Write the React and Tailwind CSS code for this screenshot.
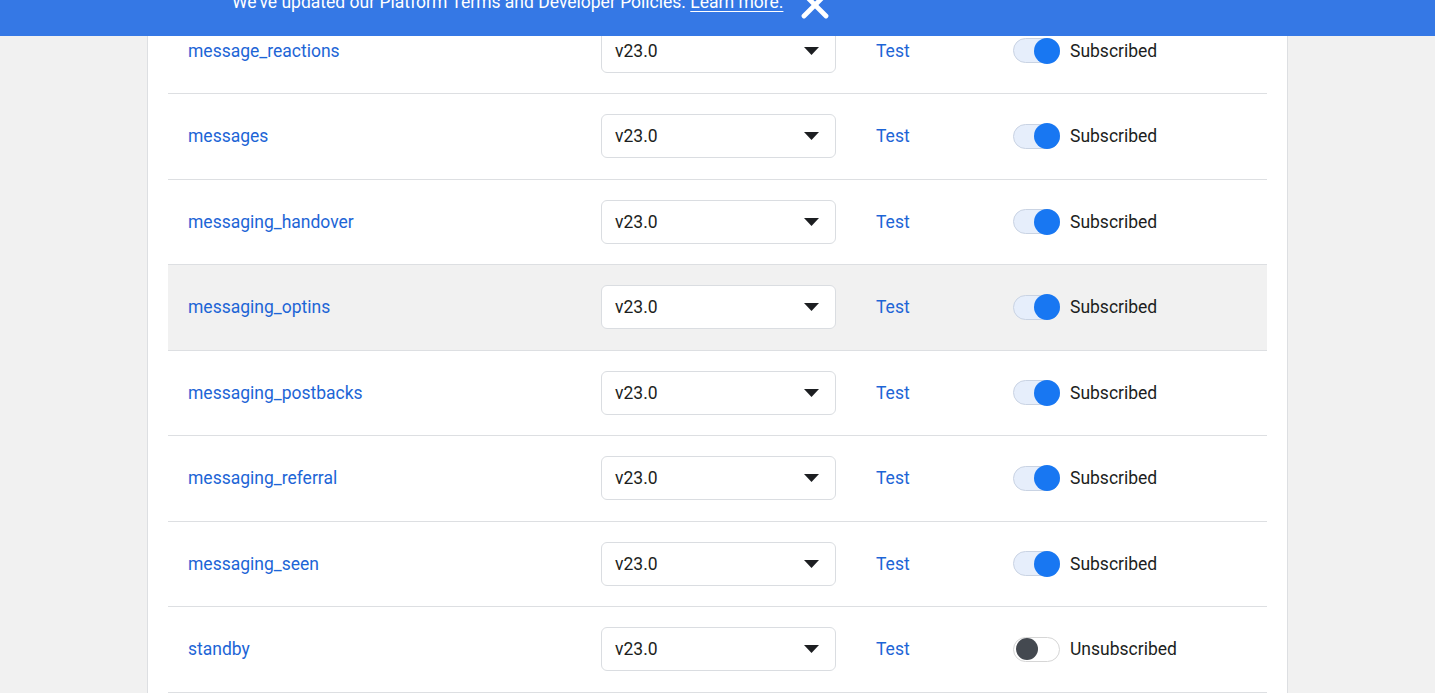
import { X } from "lucide-react"

const rows = [
  { name: "message_reactions", on: true },
  { name: "messages", on: true },
  { name: "messaging_handover", on: true },
  { name: "messaging_optins", on: true, hover: true },
  { name: "messaging_postbacks", on: true },
  { name: "messaging_referral", on: true },
  { name: "messaging_seen", on: true },
  { name: "standby", on: false },
]

function Toggle({ on }) {
  if (on) {
    return (
      <div className="w-[47px] h-[25px] rounded-full bg-[#e6eefb] border border-[#c9d3e3] flex items-center justify-end">
        <div className="w-[26px] h-[26px] rounded-full bg-[#1877f2] -mr-px" />
      </div>
    )
  }
  return (
    <div className="w-[47px] h-[25px] rounded-full bg-white border border-[#d6d6d6] flex items-center justify-start">
      <div className="w-[22px] h-[22px] rounded-full bg-[#444950] ml-[2px]" />
    </div>
  )
}

function Row({ row }) {
  return (
    <div className={`h-[85.5px] border-b border-[#dddfe2] flex items-center ${row.hover ? "bg-[#f1f1f1]" : ""}`}>
      <div className="w-[433px] pl-5 text-[17.5px] text-[#1d65d6]">{row.name}</div>
      <div className="w-[235px] h-[44px] border border-[#dadde1] rounded-md bg-white flex items-center justify-between pl-[13px] pr-[16px]">
        <span className="text-[17.5px] text-[#1c1e21]">v23.0</span>
        <svg width="15" height="8" viewBox="0 0 15 8">
          <path d="M0 0 L15 0 L7.5 8 Z" fill="#1c1e21" />
        </svg>
      </div>
      <div className="w-[137px] ml-10 text-[17.5px] text-[#1d65d6]">Test</div>
      <div className="flex items-center gap-[10px]">
        <Toggle on={row.on} />
        <span className="text-[17.5px] text-[#1c1e21]">{row.on ? "Subscribed" : "Unsubscribed"}</span>
      </div>
    </div>
  )
}

export default function App() {
  return (
    <div className="h-[693px] overflow-hidden bg-[#f1f1f1] relative" style={{ fontFamily: "Roboto, 'Liberation Sans', sans-serif" }}>
      {/* settings panel, scrolled down */}
      <div className="w-[1141px] mx-auto bg-white border-x border-[#dddfe2] px-5 pt-[8.5px] h-full">
        {rows.map((row) => (
          <Row key={row.name} row={row} />
        ))}
      </div>

      {/* top notice banner */}
      <div className="absolute top-0 left-0 right-0 h-[36px] bg-[#3578e5] overflow-hidden">
        <div className="flex items-start pl-[232px] -mt-[10px] text-white">
          <span className="text-[17.5px] leading-6">
            We've updated our Platform Terms and Developer Policies.{" "}
            <span className="underline underline-offset-[3px]">Learn more.</span>
          </span>
          <X className="w-[44px] h-[44px] ml-[10px] -mt-[7px]" strokeWidth={2.6} />
        </div>
      </div>
    </div>
  )
}
